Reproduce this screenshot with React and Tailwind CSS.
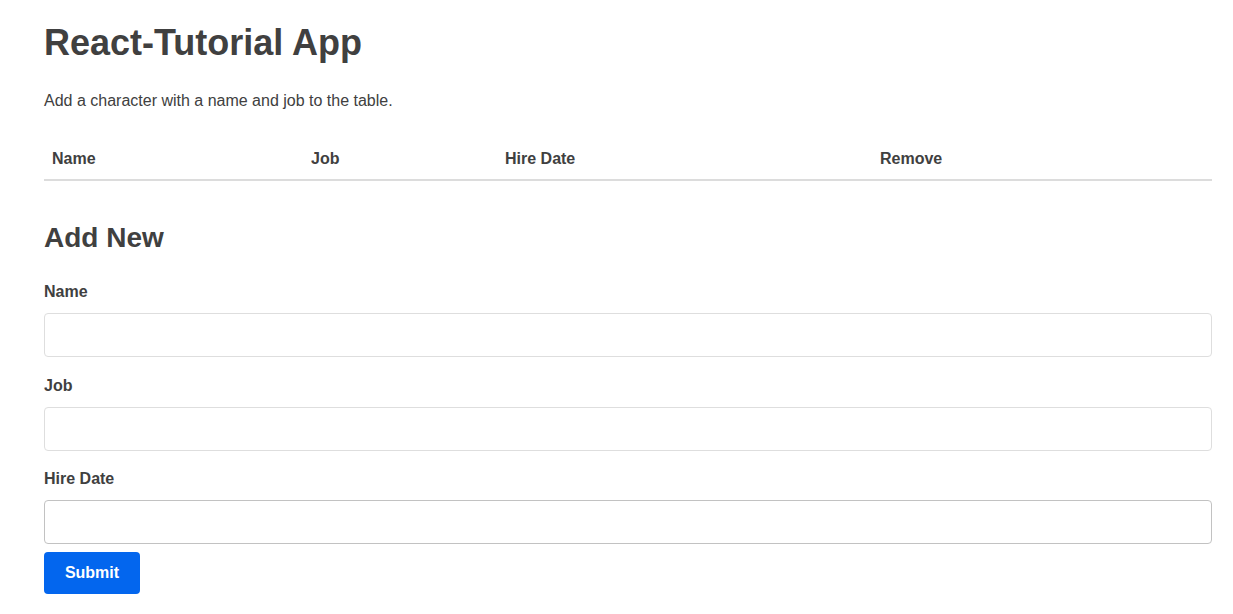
import React, { useState } from 'react';

const Field = ({ label, value, onChange, strong }) => (
  <div>
    <label className="block text-base font-bold leading-6 mb-[9px]">{label}</label>
    <input
      type="text"
      value={value}
      onChange={onChange}
      className={`block w-full h-[44px] mb-[16.5px] rounded-[4px] border px-3 outline-none ${
        strong ? 'border-[#c2c2c2]' : 'border-[#dedede]'
      }`}
    />
  </div>
);

const App = () => {
  const [form, setForm] = useState({ name: '', job: '', hireDate: '' });

  const update = (key) => (e) => setForm({ ...form, [key]: e.target.value });

  return (
    <div
      className="min-h-screen bg-white text-[#404040] pl-[44px] pr-[21px] pt-[21px]"
      style={{ fontFamily: '"Liberation Sans", Arial, sans-serif' }}
    >
      <h1 className="text-[36px] font-bold leading-[43px]">React-Tutorial App</h1>
      <p className="mt-[25px] text-base leading-6">Add a character with a name and job to the table.</p>

      {/* Characters table */}
      <table className="mt-[26px] w-full table-fixed border-collapse">
        <thead>
          <tr className="border-b-2 border-[#dcdcdc]">
            <th className="w-[259px] px-2 py-2 text-left font-bold leading-6">Name</th>
            <th className="w-[194px] px-2 py-2 text-left font-bold leading-6">Job</th>
            <th className="w-[375px] px-2 py-2 text-left font-bold leading-6">Hire Date</th>
            <th className="px-2 py-2 text-left font-bold leading-6">Remove</th>
          </tr>
        </thead>
        <tbody></tbody>
      </table>

      <h2 className="mt-[40px] text-[28px] font-bold leading-[34px]">Add New</h2>

      <form className="mt-[25px]" onSubmit={(e) => e.preventDefault()}>
        <Field label="Name" value={form.name} onChange={update('name')} />
        <Field label="Job" value={form.job} onChange={update('job')} />
        <Field label="Hire Date" value={form.hireDate} onChange={update('hireDate')} strong />
        <button
          type="submit"
          className="-mt-[9px] h-[42px] w-[96px] rounded-[4px] bg-[#0366ee] text-base font-bold text-white"
        >
          Submit
        </button>
      </form>
    </div>
  );
};

export default App;
